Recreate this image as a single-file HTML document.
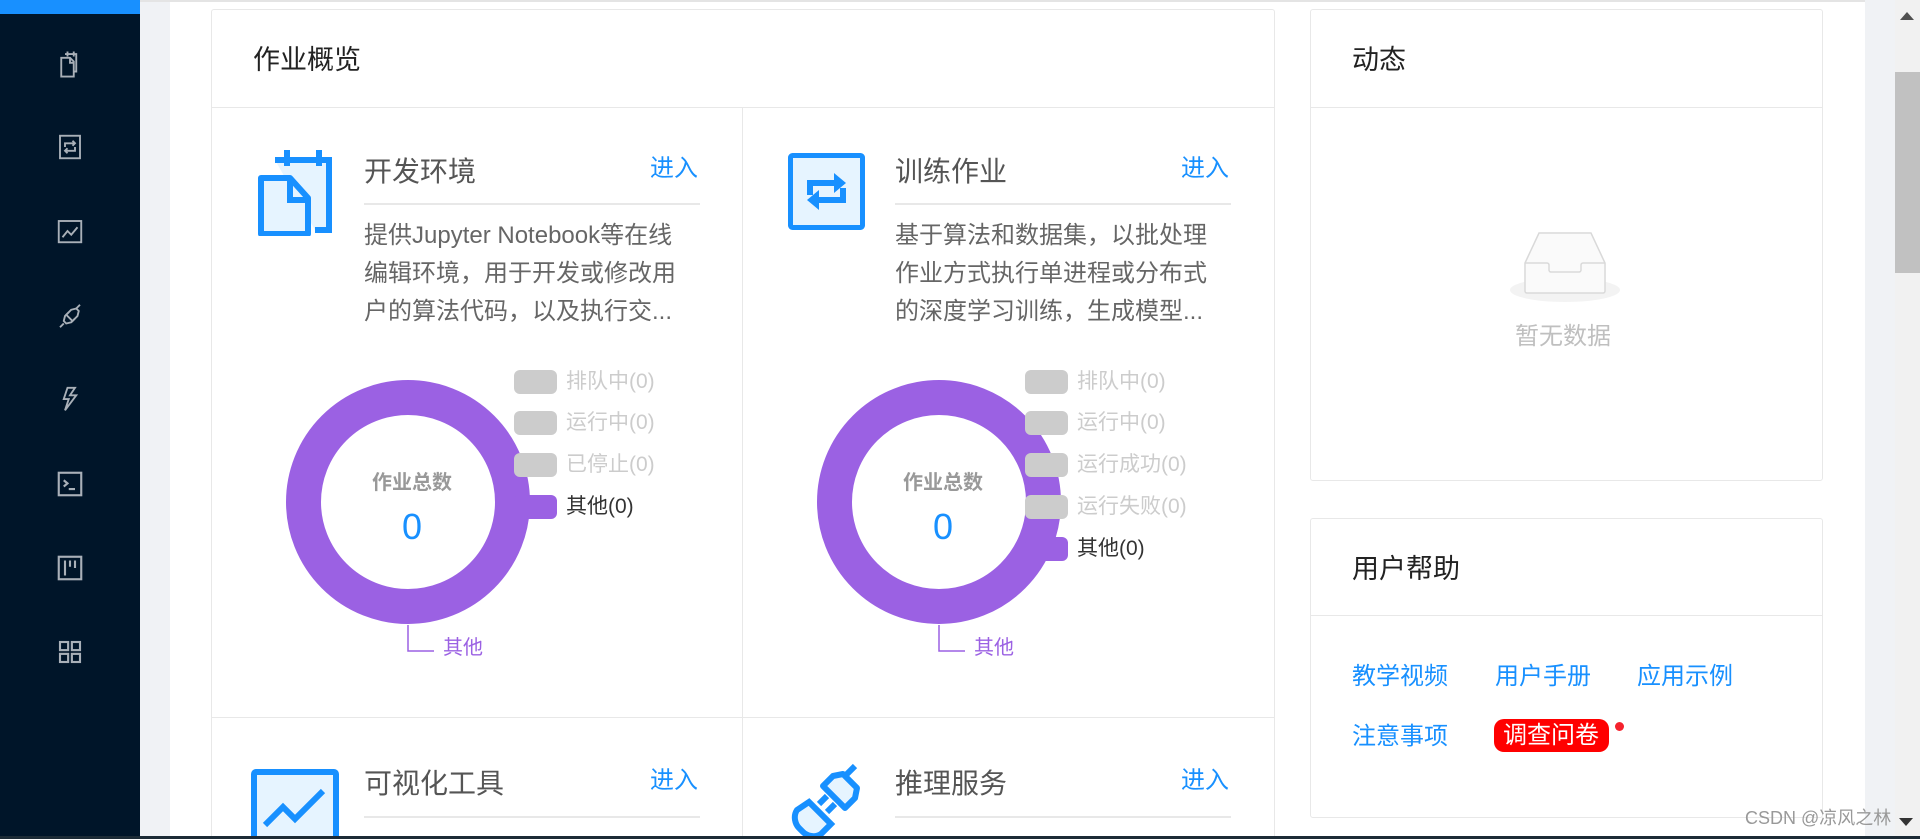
<!DOCTYPE html>
<html style="overflow:hidden;width:1920px;height:839px"><head><meta charset="utf-8"><style>
*{margin:0;padding:0;box-sizing:border-box}
body{width:1920px;height:839px;overflow:hidden;background:#fff;font-family:"Liberation Sans","Noto Sans CJK SC",sans-serif;position:relative}
.a{position:absolute}
.side{left:0;top:0;width:140px;height:839px;background:#001529}
.card{border:1px solid #e8e8e8;border-radius:3px;background:#fff}
.t{font-size:27px;color:#222;white-space:nowrap;line-height:1}
.st{font-size:28px;color:#555;white-space:nowrap;line-height:1}
.in{font-size:24px;color:#1890ff;line-height:1}
.desc{font-size:24px;color:#666;line-height:38px;white-space:nowrap}
.lg{font-size:21px;color:#ccc;white-space:nowrap;line-height:1}
.sw{width:43px;height:24px;border-radius:6px;background:#ccc}
.lk{font-size:24px;color:#1890ff;white-space:nowrap;line-height:1}
.si{left:55px;width:30px;height:30px}
</style></head><body>
<div class="a side"></div>
<div class="a" style="left:0;top:0;width:140px;height:14px;background:#1890ff"></div>
<div class="a" style="left:140px;top:0;width:30px;height:839px;background:#f0f2f5"></div>
<div class="a" style="left:140px;top:0;width:1780px;height:2px;background:#e4e4e4"></div>
<div class="a" style="left:1865px;top:0;width:30px;height:839px;background:#f0f2f5"></div>
<div class="a" style="left:1895px;top:0;width:25px;height:839px;background:#f1f1f1"></div>
<div class="a" style="left:1895px;top:72px;width:25px;height:201px;background:#c1c1c1"></div>
<svg class="a" style="left:1900px;top:12px" width="14" height="8"><path d="M0 8L7 0L14 8Z" fill="#505050"/></svg>

<!-- sidebar icons -->
<svg class="a si" style="top:49px" viewBox="0 0 24 24" fill="none" stroke="#a9b0b8" stroke-width="1.5"><path d="M8 4h9v14h-2"/><path d="M10 2v4M15 2v4"/><path d="M5 7h7l3 3v12H5z"/><path d="M12 7v4h3"/></svg>
<svg class="a si" style="top:132px" viewBox="0 0 24 24" fill="none" stroke="#a9b0b8" stroke-width="1.5"><rect x="4" y="3" width="16" height="18"/><path d="M8 12V9h8M14 7l2 2-2 2M16 12v3H8M10 13l-2 2 2 2"/></svg>
<svg class="a si" style="top:216px" viewBox="0 0 24 24" fill="none" stroke="#a9b0b8" stroke-width="1.5"><rect x="3" y="4" width="18" height="17"/><path d="M6 17l4-5 3 3 5-6"/></svg>
<svg class="a si" style="top:301px" viewBox="0 0 24 24" fill="none" stroke="#a9b0b8" stroke-width="1.5"><path d="M20 3l-3 3M4 21l3-3"/><path d="M13 7l4-1 2 2-1 4-4 4-5-5z"/><path d="M11 9l-3 3-1 4 2 2 4-1 3-3"/></svg>
<svg class="a si" style="top:384px" viewBox="0 0 24 24" fill="none" stroke="#a9b0b8" stroke-width="1.5"><path d="M15 3H10L7 12h4l-3 9 9-12h-5l4-6z"/></svg>
<svg class="a si" style="top:469px" viewBox="0 0 24 24" fill="none" stroke="#a9b0b8" stroke-width="1.7"><rect x="3" y="3" width="18" height="18"/><path d="M7 9l3 2.5-3 2.5M11 16h5"/></svg>
<svg class="a si" style="top:553px" viewBox="0 0 24 24" fill="none" stroke="#a9b0b8" stroke-width="1.7"><rect x="3" y="3" width="18" height="18"/><path d="M8 6v12M12 6v5M16 6v6"/></svg>
<svg class="a si" style="top:637px" viewBox="0 0 24 24" fill="none" stroke="#a9b0b8" stroke-width="1.7"><rect x="4" y="4" width="6.5" height="6.5"/><rect x="13.5" y="4" width="6.5" height="6.5"/><rect x="4" y="13.5" width="6.5" height="6.5"/><rect x="13.5" y="13.5" width="6.5" height="6.5"/></svg>

<!-- main card -->
<div class="a card" style="left:211px;top:9px;width:1064px;height:830px;border-bottom:none"></div>
<div class="a" style="left:211px;top:107px;width:1064px;height:1px;background:#e8e8e8"></div>
<div class="a" style="left:742px;top:108px;width:1px;height:731px;background:#e8e8e8"></div>
<div class="a" style="left:211px;top:717px;width:1064px;height:1px;background:#e8e8e8"></div>
<div class="a t" style="left:253px;top:47px">作业概览</div>

<!-- cell 1 -->
<svg class="a" style="left:257px;top:148px" width="78" height="88" viewBox="0 0 78 88"><path d="M18 12h54v70H58" fill="#e6f4ff" stroke="#1890ff" stroke-width="6"/><path d="M30 2v16M62 2v16" stroke="#1890ff" stroke-width="6"/><path d="M4 30h29l18 20v36H4z" fill="#e6f4ff" stroke="#1890ff" stroke-width="6" stroke-linejoin="round"/><path d="M33 30v22h18" fill="none" stroke="#1890ff" stroke-width="6"/></svg>
<div class="a st" style="left:364px;top:158px">开发环境</div>
<div class="a in" style="left:650px;top:157px">进入</div>
<div class="a" style="left:364px;top:203px;width:336px;height:2px;background:#e8e8e8"></div>
<div class="a desc" style="left:364px;top:217px">提供Jupyter Notebook等在线<br>编辑环境，用于开发或修改用<br>户的算法代码，以及执行交...</div>
<svg class="a" style="left:270px;top:362px" width="340" height="310"><circle cx="138" cy="140" r="104.5" fill="none" stroke="#9b61e3" stroke-width="35"/><path d="M138 263v26h26" fill="none" stroke="#9b61e3" stroke-width="1.5"/></svg>
<div class="a" style="left:370px;top:470px;width:84px;text-align:center;font-size:20px;font-weight:bold;color:#999;line-height:26px">作业总数</div>
<div class="a" style="left:370px;top:505px;width:84px;text-align:center;font-size:36px;color:#1890ff;line-height:44px">0</div>
<div class="a" style="left:443px;top:636px;font-size:20px;color:#9b61e3;line-height:24px">其他</div>
<div class="a sw" style="left:514px;top:370px"></div><div class="a lg" style="left:566px;top:371px">排队中(0)</div>
<div class="a sw" style="left:514px;top:411px"></div><div class="a lg" style="left:566px;top:412px">运行中(0)</div>
<div class="a sw" style="left:514px;top:453px"></div><div class="a lg" style="left:566px;top:454px">已停止(0)</div>
<div class="a sw" style="left:514px;top:495px;background:#9b61e3"></div><div class="a lg" style="left:566px;top:496px;color:#333">其他(0)</div>

<!-- cell 2 -->
<svg class="a" style="left:788px;top:153px" width="77" height="77" viewBox="0 0 77 77"><rect x="2.5" y="2.5" width="72" height="72" rx="2" fill="#e6f4ff" stroke="#1890ff" stroke-width="5"/><path d="M22 42V30h28" fill="none" stroke="#1890ff" stroke-width="6"/><path d="M46 20l12 10-12 10z" fill="#1890ff"/><path d="M55 35v12H27" fill="none" stroke="#1890ff" stroke-width="6"/><path d="M31 37l-12 10 12 10z" fill="#1890ff"/></svg>
<div class="a st" style="left:895px;top:158px">训练作业</div>
<div class="a in" style="left:1181px;top:157px">进入</div>
<div class="a" style="left:895px;top:203px;width:336px;height:2px;background:#e8e8e8"></div>
<div class="a desc" style="left:895px;top:217px">基于算法和数据集，以批处理<br>作业方式执行单进程或分布式<br>的深度学习训练，生成模型...</div>
<svg class="a" style="left:801px;top:362px" width="340" height="310"><circle cx="138" cy="140" r="104.5" fill="none" stroke="#9b61e3" stroke-width="35"/><path d="M138 263v26h26" fill="none" stroke="#9b61e3" stroke-width="1.5"/></svg>
<div class="a" style="left:901px;top:470px;width:84px;text-align:center;font-size:20px;font-weight:bold;color:#999;line-height:26px">作业总数</div>
<div class="a" style="left:901px;top:505px;width:84px;text-align:center;font-size:36px;color:#1890ff;line-height:44px">0</div>
<div class="a" style="left:974px;top:636px;font-size:20px;color:#9b61e3;line-height:24px">其他</div>
<div class="a sw" style="left:1025px;top:370px"></div><div class="a lg" style="left:1077px;top:371px">排队中(0)</div>
<div class="a sw" style="left:1025px;top:411px"></div><div class="a lg" style="left:1077px;top:412px">运行中(0)</div>
<div class="a sw" style="left:1025px;top:453px"></div><div class="a lg" style="left:1077px;top:454px">运行成功(0)</div>
<div class="a sw" style="left:1025px;top:495px"></div><div class="a lg" style="left:1077px;top:496px">运行失败(0)</div>
<div class="a sw" style="left:1025px;top:537px;background:#9b61e3"></div><div class="a lg" style="left:1077px;top:538px;color:#333">其他(0)</div>

<!-- row 2 -->
<svg class="a" style="left:251px;top:769px" width="88" height="75" viewBox="0 0 88 75"><rect x="3" y="3" width="82" height="75" rx="2" fill="#e6f4ff" stroke="#1890ff" stroke-width="6"/><path d="M14 56l18-18 12 12 28-28" fill="none" stroke="#1890ff" stroke-width="6"/></svg>
<div class="a st" style="left:364px;top:770px">可视化工具</div>
<div class="a in" style="left:650px;top:769px">进入</div>
<div class="a" style="left:364px;top:816px;width:336px;height:2px;background:#e8e8e8"></div>
<svg class="a" style="left:785px;top:762px" width="90" height="77" viewBox="0 0 90 77"><path d="M70 4L58 16" stroke="#1890ff" stroke-width="6"/><path d="M48 14l10-2 14 14-2 10-10 10-22-22z" fill="#e6f4ff" stroke="#1890ff" stroke-width="6" stroke-linejoin="round"/><path d="M42 34l-8 8M50 42l-8 8" stroke="#1890ff" stroke-width="6"/><path d="M24 40l22 22-10 10c-6 4-14 2-18-2l-4-4c-4-4-6-12-2-18z" fill="#e6f4ff" stroke="#1890ff" stroke-width="6"/></svg>
<div class="a st" style="left:895px;top:770px">推理服务</div>
<div class="a in" style="left:1181px;top:769px">进入</div>
<div class="a" style="left:895px;top:816px;width:336px;height:2px;background:#e8e8e8"></div>

<!-- right cards -->
<div class="a card" style="left:1310px;top:9px;width:513px;height:472px"></div>
<div class="a" style="left:1310px;top:107px;width:513px;height:1px;background:#e8e8e8"></div>
<div class="a t" style="left:1352px;top:47px">动态</div>
<svg class="a" style="left:1505px;top:230px" width="120" height="75"><ellipse cx="60" cy="60" rx="55" ry="12" fill="#f3f3f3"/><path d="M20 33l14-30h52l14 30v28a2 2 0 0 1-2 2H22a2 2 0 0 1-2-2z" fill="#fafafa" stroke="#d9d9d9" stroke-width="1.5"/><path d="M20 33h22a2 2 0 0 1 2 2v5a2 2 0 0 0 2 2h28a2 2 0 0 0 2-2v-5a2 2 0 0 1 2-2h22" fill="none" stroke="#d9d9d9" stroke-width="1.5"/></svg>
<div class="a" style="left:1515px;top:325px;font-size:24px;color:#bfbfbf;line-height:1">暂无数据</div>

<div class="a card" style="left:1310px;top:518px;width:513px;height:300px"></div>
<div class="a" style="left:1310px;top:615px;width:513px;height:1px;background:#e8e8e8"></div>
<div class="a t" style="left:1352px;top:556px">用户帮助</div>
<div class="a lk" style="left:1352px;top:665px">教学视频</div>
<div class="a lk" style="left:1495px;top:665px">用户手册</div>
<div class="a lk" style="left:1637px;top:665px">应用示例</div>
<div class="a lk" style="left:1352px;top:725px">注意事项</div>
<div class="a" style="left:1494px;top:719px;width:115px;height:33px;background:#f00;border-radius:10px"></div>
<div class="a lk" style="left:1503px;top:724px;color:#fff">调查问卷</div>
<div class="a" style="left:1615px;top:722px;width:9px;height:9px;border-radius:50%;background:#f5222d"></div>

<div class="a" style="left:1745px;top:808px;font-size:18px;color:#999;line-height:20px;white-space:nowrap">CSDN @凉风之林</div>
<svg class="a" style="left:1899px;top:818px" width="14" height="8"><path d="M0 0L7 8L14 0Z" fill="#333"/></svg>
<div class="a" style="left:0;top:836px;width:1920px;height:3px;background:#1c2b36"></div>
</body></html>
